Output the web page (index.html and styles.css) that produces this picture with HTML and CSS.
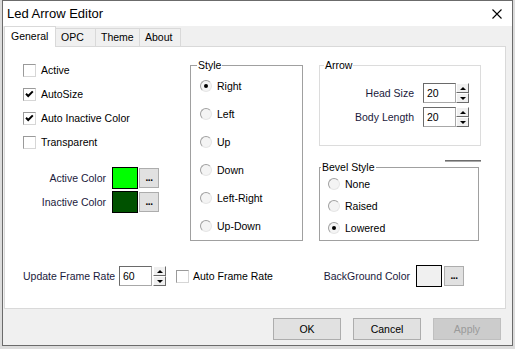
FILE: index.html
```html
<!DOCTYPE html>
<html>
<head>
<meta charset="utf-8">
<link rel="stylesheet" href="styles.css">
</head>
<body>
<div class="window">
  <div class="titlebar">
    <span class="title">Led Arrow Editor</span>
    <svg class="close" width="10" height="10" viewBox="0 0 10 10"><path d="M0.5 0.5 L9.5 9.5 M9.5 0.5 L0.5 9.5" stroke="#000" stroke-width="1.1" fill="none"/></svg>
  </div>
  <div class="client">
    <div class="tabs">
      <div class="tab active t-general">General</div>
      <div class="tab t-opc">OPC</div>
      <div class="tab t-theme">Theme</div>
      <div class="tab t-about">About</div>
    </div>
    <div class="panel">
      <div class="panel-top">
        <div class="col1">
          <div class="checks">
            <div class="check-row"><span class="cb"></span>Active</div>
            <div class="check-row"><span class="cb"><svg class="tick" width="11" height="11" viewBox="0 0 11 11"><path d="M2 4.8 L4.2 7 L8.8 2.4" stroke="#000" stroke-width="2" fill="none"/></svg></span>AutoSize</div>
            <div class="check-row"><span class="cb"><svg class="tick" width="11" height="11" viewBox="0 0 11 11"><path d="M2 4.8 L4.2 7 L8.8 2.4" stroke="#000" stroke-width="2" fill="none"/></svg></span>Auto Inactive Color</div>
            <div class="check-row"><span class="cb"></span>Transparent</div>
          </div>
          <div class="colors">
            <div class="color-row"><span class="clabel">Active Color</span><span class="swatch green"></span><span class="ell">...</span></div>
            <div class="color-row"><span class="clabel">Inactive Color</span><span class="swatch dkgreen"></span><span class="ell">...</span></div>
          </div>
        </div>
        <fieldset class="group style-group">
          <legend>Style</legend>
          <div class="radio-row"><span class="rb on"></span>Right</div>
          <div class="radio-row"><span class="rb"></span>Left</div>
          <div class="radio-row"><span class="rb"></span>Up</div>
          <div class="radio-row"><span class="rb"></span>Down</div>
          <div class="radio-row"><span class="rb"></span>Left-Right</div>
          <div class="radio-row"><span class="rb"></span>Up-Down</div>
        </fieldset>
        <div class="col3">
          <fieldset class="group arrow-group">
            <legend>Arrow</legend>
            <div class="num-row"><span class="nlabel">Head Size</span><span class="input">20</span><span class="spin"><span class="sbtn up"></span><span class="sbtn down"></span></span></div>
            <div class="num-row"><span class="nlabel">Body Length</span><span class="input">20</span><span class="spin"><span class="sbtn up"></span><span class="sbtn down"></span></span></div>
          </fieldset>
          <div class="sep"></div>
          <fieldset class="group bevel-group">
            <legend>Bevel Style</legend>
            <div class="radio-row"><span class="rb"></span>None</div>
            <div class="radio-row"><span class="rb"></span>Raised</div>
            <div class="radio-row"><span class="rb on"></span>Lowered</div>
          </fieldset>
        </div>
      </div>
      <div class="panel-bottom">
        <div class="frame-group">
          <span class="flabel">Update Frame Rate</span>
          <span class="input">60</span>
          <span class="spin fspin"><span class="sbtn up"></span><span class="sbtn down"></span></span>
          <span class="cb fcb"></span><span>Auto Frame Rate</span>
        </div>
        <div class="bg-group">
          <span class="blabel">BackGround Color</span>
          <span class="swatch light"></span>
          <span class="ell">...</span>
        </div>
      </div>
    </div>
    <div class="buttons">
      <div class="btn">OK</div>
      <div class="btn">Cancel</div>
      <div class="btn disabled">Apply</div>
    </div>
  </div>
</div>
</body>
</html>
```
FILE: styles.css
```css
* { box-sizing: border-box; }
body {
  margin: 0;
  background: #dcdcdc;
  font-family: "Liberation Sans", Arial, sans-serif;
  font-size: 10.5px;
  color: #000;
}
.window {
  margin-left: 2px;
  width: 511px;
  height: 346px;
  border: 1px solid #6b6b6b;
  display: flex;
  flex-direction: column;
  background: #f0f0f0;
}
.titlebar {
  height: 25px;
  flex-shrink: 0;
  background: #fff;
  display: flex;
  align-items: center;
  justify-content: space-between;
  padding: 0 10px 0 4px;
}
.title { font-size: 13px; }
.close { display: block; }
.client {
  flex: 1;
  padding: 0 6px 0 1px;
  display: flex;
  flex-direction: column;
}
.tabs {
  display: flex;
  align-items: flex-end;
  height: 20px;
}
.tab {
  height: 18px;
  border: 1px solid #d9d9d9;
  border-bottom: none;
  background: #f0f0f0;
  padding-left: 5px;
  line-height: 17px;
  margin-left: -1px;
}
.tab.active {
  position: relative;
  z-index: 1;
  height: 21px;
  margin-bottom: -1px;
  margin-left: 0;
  background: #fff;
  padding-left: 6px;
  line-height: 18px;
}
.t-general { width: 52px; }
.t-opc { width: 41px; }
.t-theme { width: 45px; }
.t-about { width: 42px; }
.panel {
  height: 263px;
  background: #fff;
  border: 1px solid #d9d9d9;
}
.panel-top {
  display: flex;
  align-items: flex-start;
}
.col1 {
  margin-left: 18px;
  width: 167px;
  padding-top: 11px;
}
.check-row {
  display: flex;
  align-items: center;
  height: 24px;
}
.cb {
  width: 13px;
  height: 13px;
  flex-shrink: 0;
  margin-right: 5px;
  border: 1px solid;
  border-color: #9a9a9a #d6d6d6 #d6d6d6 #9a9a9a;
  background: #fff;
  display: flex;
  align-items: center;
  justify-content: center;
}
.tick { display: block; }
.colors { margin-top: 13px; }
.color-row {
  display: flex;
  align-items: flex-start;
  height: 24px;
}
.clabel, .nlabel, .flabel, .blabel { color: #1a1a3c; }
.clabel {
  width: 83px;
  text-align: right;
  line-height: 22px;
  margin-right: 6px;
}
.swatch {
  width: 26px;
  height: 22px;
  border: 1px solid #000;
  flex-shrink: 0;
}
.green { background: #00ff00; }
.dkgreen { background: #005200; }
.light { background: #f0f0f0; }
.ell {
  width: 20px;
  height: 20px;
  flex-shrink: 0;
  margin: 1px 0 0 1px;
  background: #e1e1e1;
  border: 1px solid #adadad;
  font-weight: bold;
  font-size: 10px;
  line-height: 10px;
  display: flex;
  align-items: flex-end;
  justify-content: center;
  padding-bottom: 4px;
  letter-spacing: -0.5px;
}
.group {
  margin: 0;
  padding: 0;
  min-width: 0;
  border: 1px solid #a0a0a0;
}
.group legend {
  padding: 0 1px;
  line-height: 12px;
  font-size: 10.5px;
}
.radio-row {
  display: flex;
  align-items: center;
}
.rb {
  width: 12px;
  height: 12px;
  flex-shrink: 0;
  border-radius: 50%;
  border: 1px solid;
  border-color: #a0a0a0 #e6e6e6 #e6e6e6 #a0a0a0;
  background: #f4f4f4;
  margin-right: 5px;
  display: flex;
  align-items: center;
  justify-content: center;
}
.rb.on::after {
  content: "";
  width: 4px;
  height: 4px;
  border-radius: 50%;
  background: #000;
}
.style-group {
  width: 113px;
  margin-top: 12px;
  padding-top: 1px;
}
.style-group legend { margin-left: 6px; }
.style-group .radio-row {
  height: 28px;
  padding-left: 9px;
}
.col3 {
  margin-left: 16px;
  width: 162px;
}
.arrow-group {
  margin-top: 12px;
  border-color: #dcdcdc;
  padding: 12px 0 18px;
}
.arrow-group legend { margin-left: 4px; }
.num-row {
  display: flex;
  align-items: center;
  height: 20px;
}
.num-row + .num-row { margin-top: 4px; }
.nlabel {
  width: 94px;
  text-align: right;
  margin-right: 9px;
}
.input {
  width: 33px;
  height: 20px;
  flex-shrink: 0;
  border: 1px solid;
  border-color: #6a6a6a #a8a8a8 #a8a8a8 #6a6a6a;
  background: #fff;
  padding-left: 3px;
  line-height: 18px;
}
.spin {
  width: 13px;
  height: 20px;
  flex-shrink: 0;
  display: flex;
  flex-direction: column;
}
.sbtn {
  flex: 1;
  background: #f0f0f0;
  border: 1px solid;
  border-color: #fff #6a6a6a #6a6a6a #fff;
  display: flex;
  align-items: center;
  justify-content: center;
}
.sbtn.up::after {
  content: "";
  border-left: 3px solid transparent;
  border-right: 3px solid transparent;
  border-bottom: 3px solid #000;
}
.sbtn.down::after {
  content: "";
  border-left: 3px solid transparent;
  border-right: 3px solid transparent;
  border-top: 3px solid #000;
}
.sep {
  margin: 14px 0 -1px 126px;
  width: 36px;
  height: 2px;
  border-top: 1px solid #6d6d6d;
  border-bottom: 1px solid #a8a8a8;
}
.bevel-group {
  width: 160px;
  padding-bottom: 1px;
}
.bevel-group legend { margin-left: 1px; }
.bevel-group .radio-row {
  height: 22px;
  padding-left: 8px;
}
.panel-bottom {
  display: flex;
  align-items: center;
  height: 22px;
  margin-top: 24px;
  padding-left: 18px;
}
.frame-group {
  display: flex;
  align-items: center;
  width: 296px;
}
.flabel { width: 96px; }
.fspin { margin-left: 1px; }
.fcb { margin-left: 10px; margin-right: 4px; }
.bg-group {
  display: flex;
  align-items: center;
}
.blabel {
  width: 91px;
  text-align: right;
  margin-right: 6px;
}
.bg-group .ell { margin: 0 0 0 2px; }
.buttons {
  display: flex;
  justify-content: flex-end;
  gap: 12px;
  margin-top: 9px;
  padding-right: 5px;
}
.btn {
  width: 68px;
  height: 22px;
  background: #e1e1e1;
  border: 1px solid #adadad;
  display: flex;
  align-items: center;
  justify-content: center;
}
.btn.disabled {
  background: #cccccc;
  border-color: #bfbfbf;
  color: #9a9a9a;
}
```
